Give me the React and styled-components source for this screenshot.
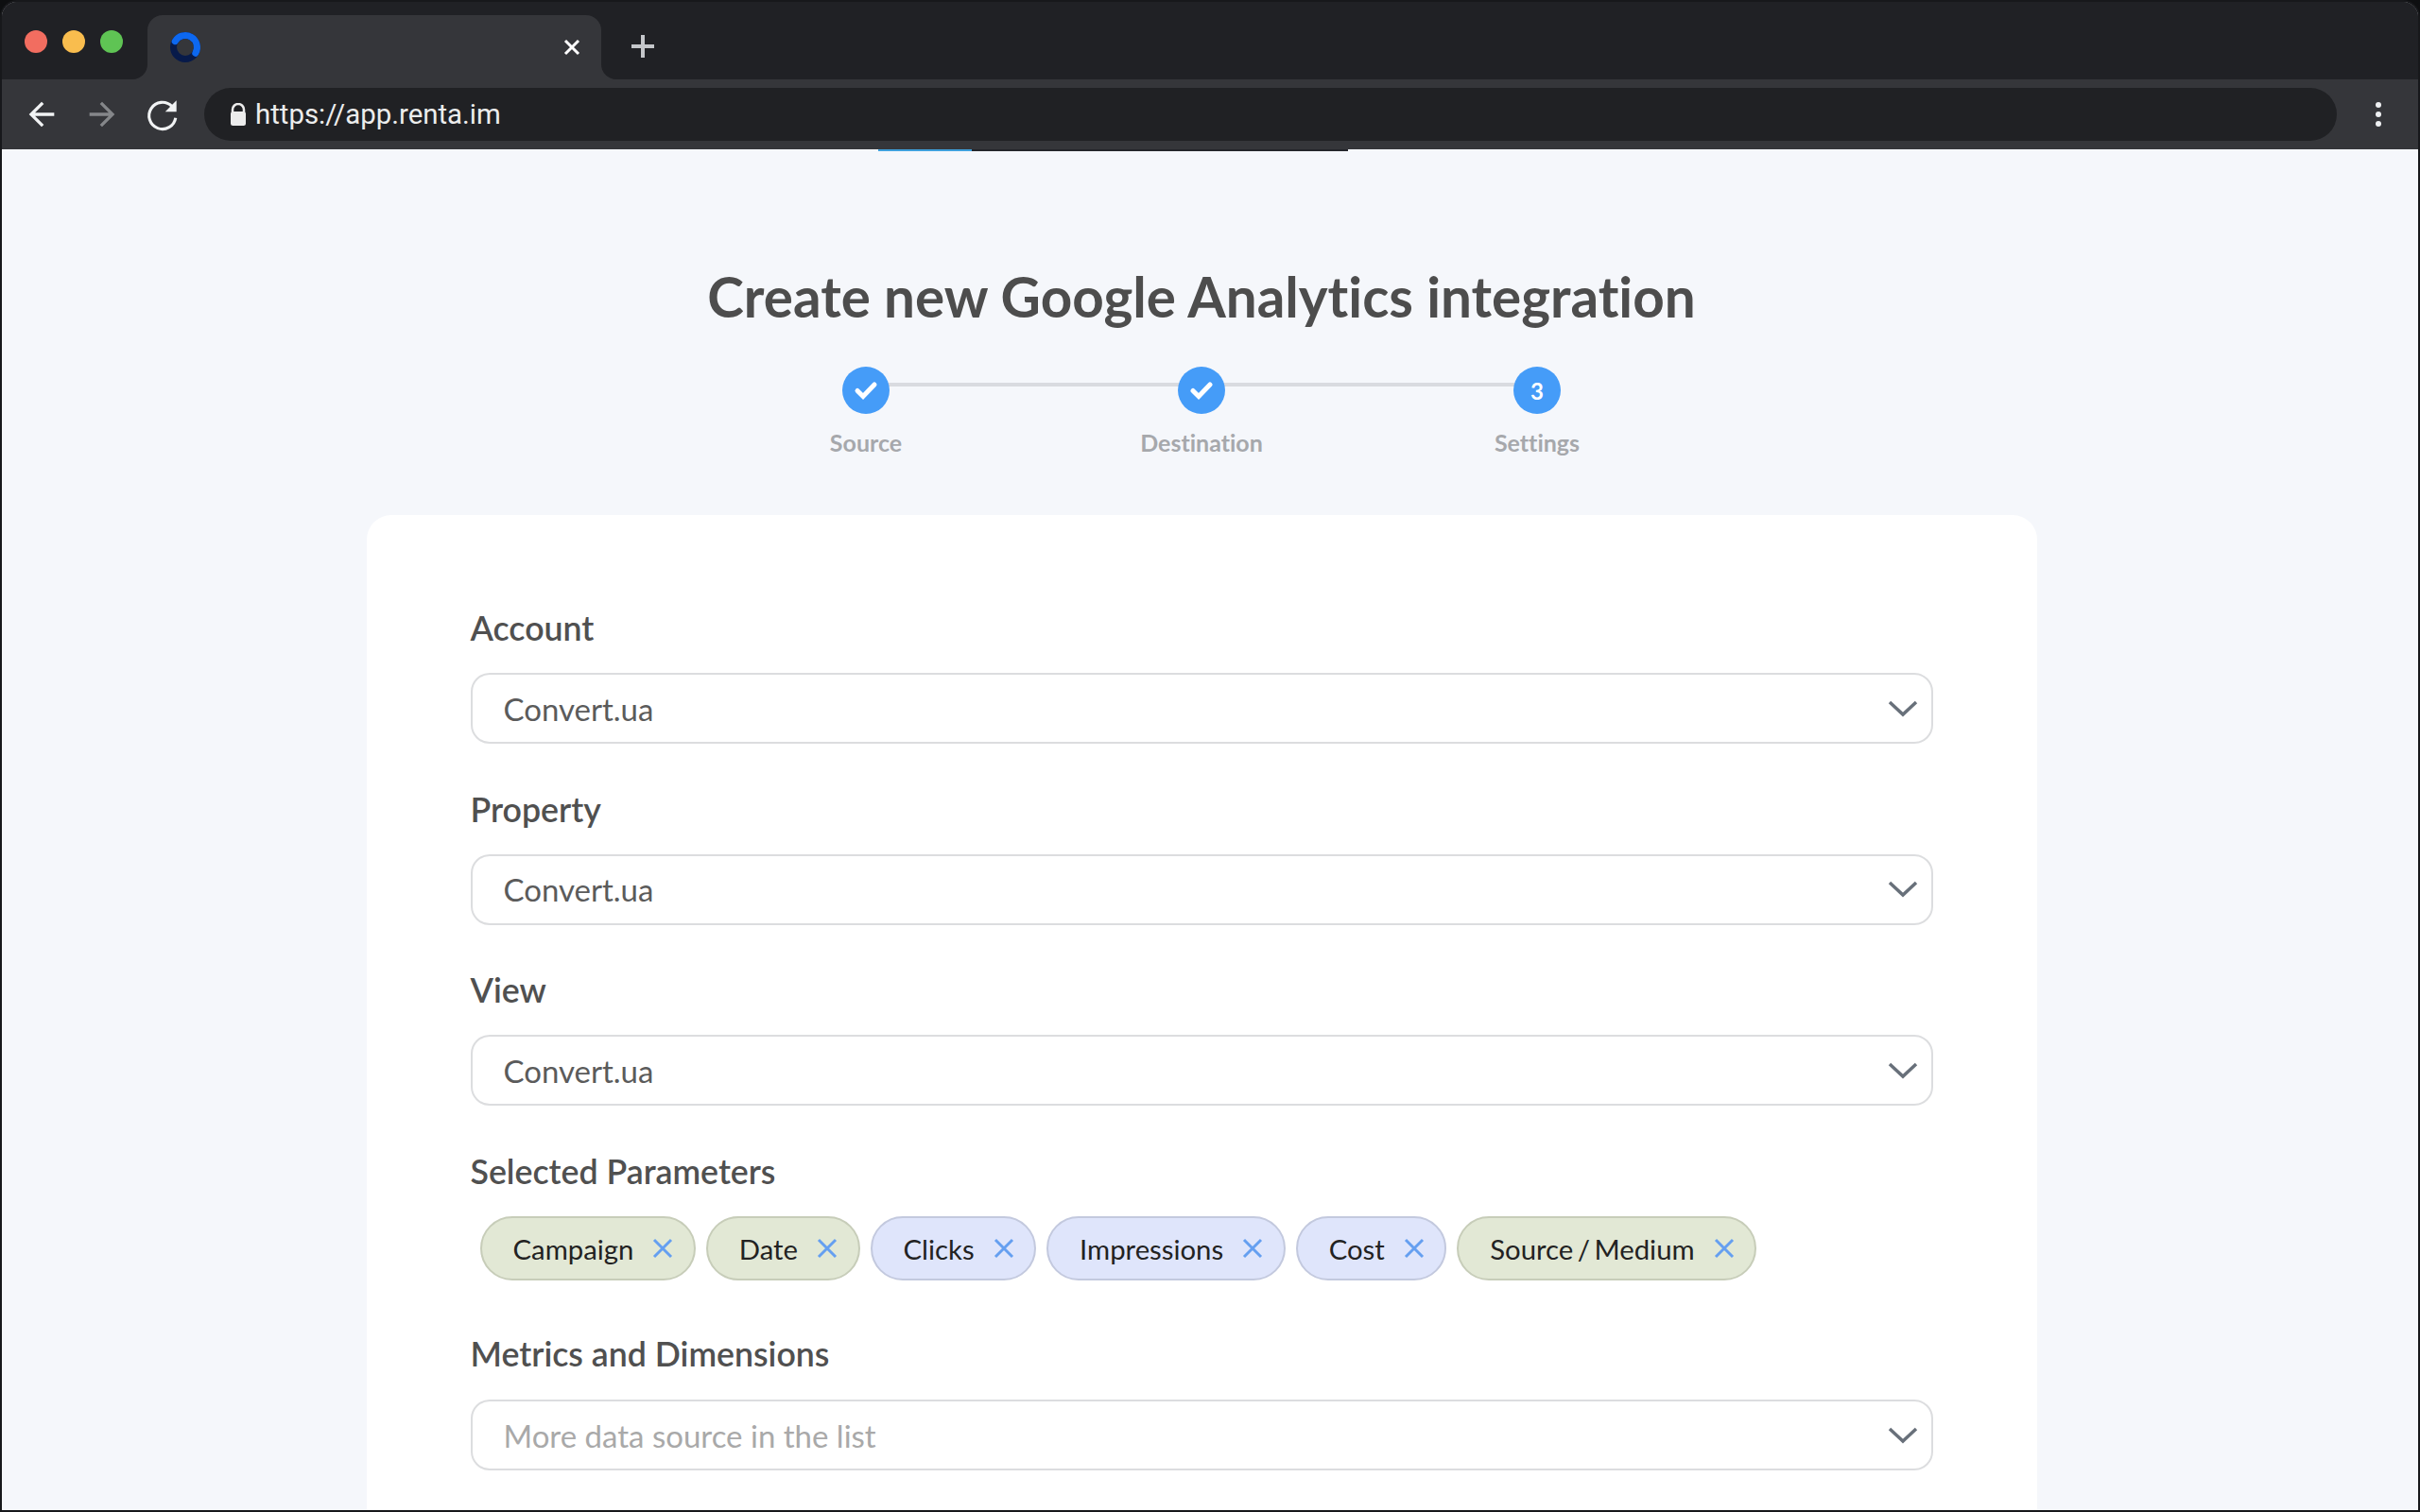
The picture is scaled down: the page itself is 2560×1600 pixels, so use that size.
import styled, { createGlobalStyle } from 'styled-components';

const GlobalStyle = createGlobalStyle`
  html, body {
    margin: 0;
    padding: 0;
    background: #0e0f11;
    overflow: hidden;
  }
  * {
    box-sizing: border-box;
  }
`;

const Window = styled.div`
  width: 2560px;
  height: 1600px;
  display: flex;
  flex-direction: column;
  overflow: hidden;
  border: 2px solid #17181b;
  border-radius: 18px 18px 0 0;
  background: #f5f7fb;
  font-family: 'Lato', 'Liberation Sans', sans-serif;
  font-variant-ligatures: none;
`;

const TabStrip = styled.div`
  height: 82px;
  flex: none;
  display: flex;
  background: #35363a;
  margin: 0 -2px;
`;

const TrafficZone = styled.div`
  width: 156px;
  display: flex;
  align-items: center;
  gap: 16px;
  padding: 2px 0 0 26px;
  background: #202125;
  border-bottom-right-radius: 16px;
`;

const Light = styled.span`
  width: 24px;
  height: 24px;
  border-radius: 50%;
  background: ${(p) => p.$color};
`;

const TabSlot = styled.div`
  width: 480px;
  padding-top: 14px;
  background: #202125;
`;

const Tab = styled.div`
  height: 68px;
  display: flex;
  align-items: center;
  justify-content: space-between;
  padding: 0 21px 0 22px;
  background: #35363a;
  border-radius: 16px 16px 0 0;
`;

const StripRest = styled.div`
  flex: 1;
  display: flex;
  align-items: center;
  padding: 12px 0 0 30px;
  background: #202125;
  border-bottom-left-radius: 16px;
`;

const NavBar = styled.div`
  height: 74px;
  flex: none;
  display: flex;
  align-items: center;
  margin: 0 -2px;
  padding: 0 41px 0 24px;
  background: #35363a;
`;

const NavIcon = styled.svg`
  width: ${(p) => p.$size}px;
  height: ${(p) => p.$size}px;
  margin-right: ${(p) => p.$gap}px;
  flex: none;
  fill: ${(p) => p.$color};
`;

const AddressBar = styled.div`
  flex: 1;
  height: 56px;
  display: flex;
  align-items: center;
  gap: 8px;
  padding-left: 26px;
  border-radius: 28px;
  background: #202124;
`;

const Url = styled.span`
  font-family: 'Roboto', 'Liberation Sans', sans-serif;
  font-size: 29.4px;
  color: #eceded;
`;

const MenuDots = styled.div`
  width: 6px;
  margin-left: 41px;
  display: flex;
  flex-direction: column;
  gap: 4px;
`;

const MenuDot = styled.span`
  width: 6px;
  height: 6px;
  border-radius: 50%;
  background: #eef0f2;
`;

const Page = styled.main`
  flex: 1;
  min-height: 0;
  display: flex;
  flex-direction: column;
  align-items: center;
  padding-right: 18px;
  overflow: hidden;
`;

const LoadBar = styled.div`
  flex: none;
  align-self: flex-start;
  width: 497px;
  height: 2px;
  margin-left: 927px;
  background: linear-gradient(to right, #3fa0dc 0 99px, #24262b 99px);
`;

const Title = styled.h1`
  flex: none;
  margin: 120px 0 0;
  height: 70px;
  font-size: 58.4px;
  line-height: 66px;
  font-weight: 700;
  color: #4d4d4d;
  white-space: nowrap;
`;

const Stepper = styled.ol`
  flex: none;
  position: relative;
  list-style: none;
  width: 1065px;
  margin: 38px 0 0;
  padding: 0;
  display: grid;
  grid-template-columns: repeat(3, 1fr);
  &::before {
    content: '';
    position: absolute;
    top: 17px;
    left: 177px;
    right: 177px;
    height: 4px;
    background: #d9dbe0;
  }
`;

const Step = styled.li`
  position: relative;
  display: flex;
  flex-direction: column;
  align-items: center;
  gap: 17px;
`;

const StepBadge = styled.span`
  width: 50px;
  height: 50px;
  display: flex;
  align-items: center;
  justify-content: center;
  border-radius: 50%;
  background: #459cf8;
  font-size: 24px;
  font-weight: 700;
  color: #fff;
`;

const StepLabel = styled.span`
  height: 30px;
  font-size: 25px;
  line-height: 27px;
  font-weight: 700;
  color: #a6a8ac;
`;

const Card = styled.section`
  width: 1767px;
  flex: 1 0 auto;
  margin-top: 60px;
  padding: 99px 110px 0;
  background: #fff;
  border-radius: 26px 26px 0 0;
`;

const Field = styled.div`
  margin-bottom: ${(p) => p.$after ?? 48.7}px;
`;

const FieldLabel = styled.div`
  height: 44px;
  margin-bottom: ${(p) => p.$after ?? 24}px;
  font-size: 35.7px;
  line-height: 41px;
  font-weight: 600;
  color: #505050;
`;

const Select = styled.div`
  height: 75px;
  display: flex;
  align-items: center;
  justify-content: space-between;
  padding: 0 14px 0 33px;
  border: 2px solid #dcdddf;
  border-radius: 20px;
  font-size: 33px;
  color: ${(p) => (p.$placeholder ? '#a9a9a9' : '#5b5b5b')};
`;

const Chevron = styled.svg`
  width: 32px;
  height: 18px;
  fill: none;
  stroke: #68707a;
  stroke-width: 3.5;
`;

const ChipRow = styled.div`
  display: flex;
  gap: 11px;
  padding-left: 10px;
`;

const Chip = styled.div`
  height: 68px;
  display: flex;
  align-items: center;
  gap: 20px;
  padding: 0 21.5px 0 33px;
  border-radius: 34px;
  border: 2px solid ${(p) => (p.$kind === 'dimension' ? '#c7cdb9' : '#c3c9de')};
  background: ${(p) => (p.$kind === 'dimension' ? '#e2e8d5' : '#dfe5fb')};
  font-size: 29.3px;
  word-spacing: -3px;
  color: #222;
`;

const ChipClose = styled.svg`
  width: 22px;
  height: 22px;
  flex: none;
  fill: none;
  stroke: #659ff0;
  stroke-width: 3;
`;

const selects = ['Account', 'Property', 'View'];

const chips = [
  { name: 'Campaign', kind: 'dimension' },
  { name: 'Date', kind: 'dimension' },
  { name: 'Clicks', kind: 'metric' },
  { name: 'Impressions', kind: 'metric' },
  { name: 'Cost', kind: 'metric' },
  { name: 'Source / Medium', kind: 'dimension' },
];

const CheckIcon = () => (
  <svg width="26" height="22" viewBox="0 0 26 22" fill="none" stroke="#fff" strokeWidth="5" strokeLinecap="round">
    <path d="M4 11.500l6 6L22 5" />
  </svg>
);

const ChevronDown = () => (
  <Chevron viewBox="0 0 32 18">
    <path d="M2 2l14 13L30 2" />
  </Chevron>
);

const RentaLogo = () => (
  <svg width="36" height="36" viewBox="0 0 36 36" fill="none" strokeWidth="7">
    <circle cx="18" cy="18" r="12.500" stroke="#071a4a" />
    <path d="M7.200 11.700A12.500 12.500 0 1 1 28.800 24.300" stroke="#0d68f0" strokeLinecap="round" />
  </svg>
);

const App = () => {
  return (
    <>
      <GlobalStyle />
      <Window>
        <TabStrip>
          <TrafficZone>
            <Light $color="#f26d60" />
            <Light $color="#f9bd4e" />
            <Light $color="#5fc454" />
          </TrafficZone>
          <TabSlot>
            <Tab>
              <RentaLogo />
              <svg width="20" height="20" viewBox="0 0 20 20" stroke="#fff" strokeWidth="3">
                <path d="M3 3l14 14M17 3L3 17" />
              </svg>
            </Tab>
          </TabSlot>
          <StripRest>
            <svg width="28" height="28" viewBox="0 0 28 28" stroke="#c4c6ca" strokeWidth="4">
              <path d="M14 2v24M2 14h24" />
            </svg>
          </StripRest>
        </TabStrip>
        <NavBar>
          <NavIcon viewBox="0 0 24 24" $size={40} $gap={24} $color="#f1f3f4">
            <path d="M20 11H7.830l5.590-5.590L12 4l-8 8 8 8 1.410-1.410L7.830 13H20v-2z" />
          </NavIcon>
          <NavIcon viewBox="0 0 24 24" $size={40} $gap={22} $color="#85878a">
            <path d="M4 13h12.170l-5.590 5.590L12 20l8-8-8-8-1.410 1.410L16.170 11H4v2z" />
          </NavIcon>
          <NavIcon viewBox="0 0 24 24" $size={44} $gap={22} $color="#f1f3f4">
            <path d="M17.300 7.300A7.700 7.700 0 1 0 19.500 14" fill="none" stroke="#f1f3f4" strokeWidth="1.700" />
            <path d="M20 4v6.500h-6.500z" />
          </NavIcon>
          <AddressBar>
            <svg width="20" height="24" viewBox="0 0 20 24">
              <path d="M4 10V7a6 6 0 0 1 12 0v3" fill="none" stroke="#ececec" strokeWidth="2.500" />
              <rect x="2" y="9" width="16" height="15" rx="2.500" fill="#ececec" />
            </svg>
            <Url>https://app.renta.im</Url>
          </AddressBar>
          <MenuDots>
            <MenuDot />
            <MenuDot />
            <MenuDot />
          </MenuDots>
        </NavBar>
        <Page>
          <LoadBar />
          <Title>Create new Google Analytics integration</Title>
          <Stepper>
            <Step>
              <StepBadge>
                <CheckIcon />
              </StepBadge>
              <StepLabel>Source</StepLabel>
            </Step>
            <Step>
              <StepBadge>
                <CheckIcon />
              </StepBadge>
              <StepLabel>Destination</StepLabel>
            </Step>
            <Step>
              <StepBadge>3</StepBadge>
              <StepLabel>Settings</StepLabel>
            </Step>
          </Stepper>
          <Card>
            {selects.map((label) => (
              <Field key={label}>
                <FieldLabel>{label}</FieldLabel>
                <Select>
                  Convert.ua
                  <ChevronDown />
                </Select>
              </Field>
            ))}
            <Field $after={57}>
              <FieldLabel>Selected Parameters</FieldLabel>
              <ChipRow>
                {chips.map((chip) => (
                  <Chip key={chip.name} $kind={chip.kind}>
                    {chip.name}
                    <ChipClose viewBox="0 0 22 22">
                      <path d="M2 2l18 18M20 2L2 20" />
                    </ChipClose>
                  </Chip>
                ))}
              </ChipRow>
            </Field>
            <Field>
              <FieldLabel $after={25}>Metrics and Dimensions</FieldLabel>
              <Select $placeholder>
                More data source in the list
                <ChevronDown />
              </Select>
            </Field>
          </Card>
        </Page>
      </Window>
    </>
  );
};

export default App;
